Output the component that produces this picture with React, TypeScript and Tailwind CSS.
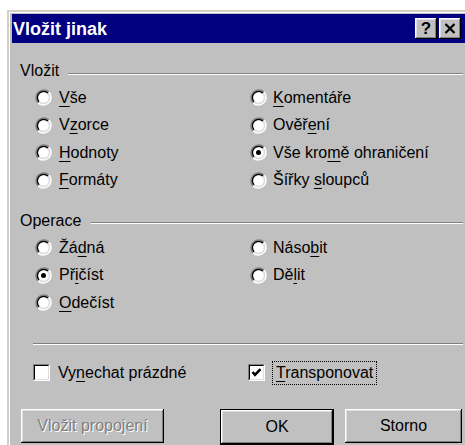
import type { ReactNode } from "react";

const bevel =
  "shadow-[inset_-1px_-1px_#000,inset_1px_1px_#fff,inset_-2px_-2px_#808080,inset_2px_2px_#dfdfdf]";

function Radio({ checked }: { checked?: boolean }) {
  return (
    <span className="block h-[17px] w-[17px] shrink-0">
      <svg viewBox="0 0 17 17" className="h-full w-full">
        <path d="M3.06 13.94 A7.7 7.7 0 0 1 13.94 3.06" fill="none" stroke="#808080" strokeWidth="1.6" />
        <path d="M13.94 3.06 A7.7 7.7 0 0 1 3.06 13.94" fill="none" stroke="#ffffff" strokeWidth="1.6" />
        <path d="M4.19 12.81 A6.1 6.1 0 0 1 12.81 4.19" fill="none" stroke="#000000" strokeWidth="1.6" />
        <path d="M12.81 4.19 A6.1 6.1 0 0 1 4.19 12.81" fill="none" stroke="#dfdfdf" strokeWidth="1.6" />
        <circle cx="8.5" cy="8.5" r="5.3" fill="#ffffff" />
        {checked && <circle cx="8.5" cy="8.5" r="2.5" fill="#000000" />}
      </svg>
    </span>
  );
}

function Checkbox({ checked }: { checked?: boolean }) {
  return (
    <span className="flex h-[17px] w-[17px] shrink-0 border border-t-[#808080] border-l-[#808080] border-b-white border-r-white">
      <span className="flex flex-1 items-center justify-center border border-t-black border-l-black border-b-[#dfdfdf] border-r-[#dfdfdf] bg-white">
        {checked && (
          <svg width="11" height="11" viewBox="0 0 11 11">
            <path d="M1.5 5 L4 7.8 L9.5 2.2" fill="none" stroke="#000" strokeWidth="2.6" />
          </svg>
        )}
      </span>
    </span>
  );
}

// label with one underlined access key: [before, key, after]
function Label({ parts }: { parts: [string, string, string] }) {
  return (
    <span className="whitespace-nowrap leading-[18px]">
      {parts[0]}
      <span className="underline decoration-1 underline-offset-[3px]">{parts[1]}</span>
      {parts[2]}
    </span>
  );
}

function Option({ parts, checked, gap }: { parts: [string, string, string]; checked?: boolean; gap: string }) {
  return (
    <div className={`flex items-center ${gap}`}>
      <Radio checked={checked} />
      <Label parts={parts} />
    </div>
  );
}

function Etched({ className = "" }: { className?: string }) {
  return <div className={`h-[2px] border-t border-b border-t-[#808080] border-b-white ${className}`} />;
}

function GroupHeader({ title, lineGap }: { title: string; lineGap: string }) {
  return (
    <div className="flex h-[18px] items-start pl-[8px]">
      <span className="leading-[18px]">{title}</span>
      <Etched className={`flex-1 ${lineGap}`} />
    </div>
  );
}

function Button({ children, className = "" }: { children: ReactNode; className?: string }) {
  return (
    <div className={`flex h-[34px] items-center justify-center bg-[#c0c0c0] ${bevel} ${className}`}>
      {children}
    </div>
  );
}

const pasteLeft: [string, string, string][] = [
  ["", "V", "še"],
  ["V", "z", "orce"],
  ["", "H", "odnoty"],
  ["", "F", "ormáty"],
];

const pasteRight: [string, string, string][] = [
  ["", "K", "omentáře"],
  ["Ověř", "e", "ní"],
  ["Vše kro", "m", "ě ohraničení"],
  ["Šířky ", "s", "loupců"],
];

const operations: [string, string, string][] = [
  ["Žá", "d", "ná"],
  ["Př", "i", "číst"],
  ["", "O", "dečíst"],
  ["Náso", "b", "it"],
  ["Dě", "l", "it"],
];

export default function App() {
  return (
    <div className="h-[445px] w-[465px] overflow-hidden bg-white pl-[7px] pt-[10px] font-['Liberation_Sans',Arial,sans-serif] text-[16px] text-black">
      <div className="h-[460px] w-[462px] border-l-2 border-t-2 border-[#d4d0c8]">
        <div className="h-full border-l border-t border-white bg-[#c0c0c0] pl-[2px] pt-[1px]">
          {/* title bar */}
          <div className="flex h-[29px] items-center justify-between bg-[#000080] pl-[1px] pr-[8px]">
            <span className="text-[18px] font-bold leading-none text-white">Vložit jinak</span>
            <div className="flex gap-[2px]">
              <div className={`flex h-[21px] w-[22px] items-center justify-center bg-[#c0c0c0] text-[17px] font-bold leading-none ${bevel}`}>
                ?
              </div>
              <div className={`flex h-[21px] w-[22px] items-center justify-center bg-[#c0c0c0] ${bevel}`}>
                <svg width="12" height="11" viewBox="0 0 12 11">
                  <path d="M1.5 1 L10.5 10 M10.5 1 L1.5 10" stroke="#000" strokeWidth="2.2" />
                </svg>
              </div>
            </div>
          </div>

          <div className="pr-[6px]">
            {/* paste */}
            <div className="mt-[19px]">
              <GroupHeader title="Vložit" lineGap="ml-[9px] mt-[11px]" />
            </div>
            <div className="mt-[4px] grid grid-flow-col grid-cols-[215px_1fr] grid-rows-[repeat(4,27.5px)] pl-[23px]">
              {pasteLeft.map((p) => (
                <Option key={p.join("")} parts={p} gap="gap-[7px]" />
              ))}
              {pasteRight.map((p, i) => (
                <Option key={p.join("")} parts={p} checked={i === 2} gap="gap-[6px]" />
              ))}
            </div>

            {/* operation */}
            <div className="mt-[18px]">
              <GroupHeader title="Operace" lineGap="ml-[10px] mt-[10px]" />
            </div>
            <div className="mt-[4px] grid grid-flow-col grid-cols-[215px_1fr] grid-rows-[repeat(3,27.5px)] pl-[23px]">
              {operations.map((p, i) => (
                <Option key={p.join("")} parts={p} checked={i === 1} gap={i < 3 ? "gap-[7px]" : "gap-[6px]"} />
              ))}
            </div>

            <Etched className="ml-[21px] mt-[26px]" />

            {/* options */}
            <div className="mt-[15px] grid h-[26px] grid-cols-[215px_1fr] items-center pl-[21px]">
              <div className="flex items-center gap-[8px]">
                <Checkbox />
                <Label parts={["Vy", "n", "echat prázdné"]} />
              </div>
              <div className="flex items-center gap-[7px]">
                <Checkbox checked />
                <span className="flex h-[24px] items-center border border-dotted border-black px-[3px]">
                  <Label parts={["", "T", "ransponovat"]} />
                </span>
              </div>
            </div>

            {/* buttons */}
            <div className="mt-[23px] flex pl-[9px]">
              <Button className="w-[143px] text-[#808080] [text-shadow:1px_1px_0_#fff]">Vložit propojení</Button>
              <div className="ml-[56px] border border-black">
                <Button className="h-[32px] w-[112px]">OK</Button>
              </div>
              <Button className="ml-[11px] w-[117px]">Storno</Button>
            </div>
          </div>
        </div>
      </div>
    </div>
  );
}
